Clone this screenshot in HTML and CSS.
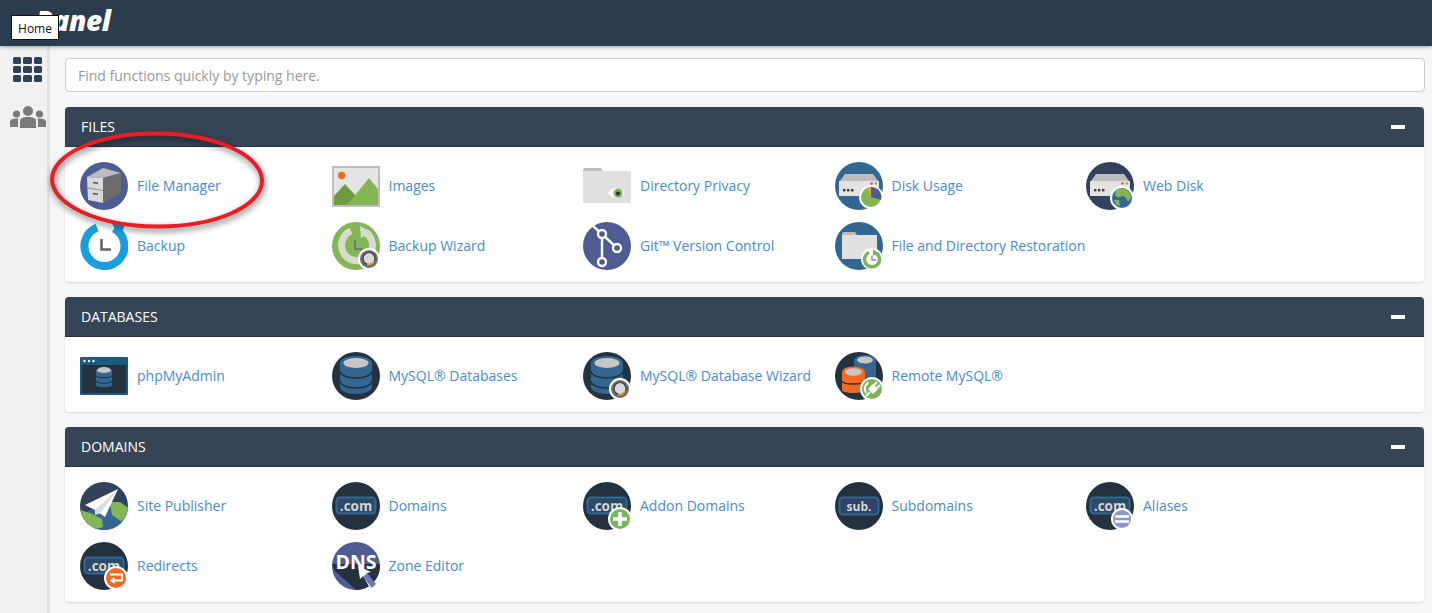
FILE: index.html
```html
<!DOCTYPE html>
<html lang="en">
<head>
<meta charset="utf-8">
<title>cPanel</title>
<link rel="stylesheet" href="styles.css">
</head>
<body>
<svg class="defs" width="0" height="0" aria-hidden="true">
  <defs>
    <clipPath id="disc"><circle cx="24" cy="24" r="24"/></clipPath>
    <g id="server">
      <path d="M5 19 10 12H38L43 19Z" fill="#bdbdbd"/>
      <rect x="4" y="19" width="40" height="15" fill="#e3e3e3"/>
      <rect x="8" y="27" width="2.4" height="2.4" fill="#3a3a3a"/>
      <rect x="12" y="27" width="2.4" height="2.4" fill="#3a3a3a"/>
      <rect x="16" y="27" width="2.4" height="2.4" fill="#3a3a3a"/>
      <circle cx="36.500" cy="21.500" r="1.300" fill="#d9534f"/>
      <circle cx="41" cy="21.500" r="1.300" fill="#7ab55c"/>
    </g>
    <g id="db">
      <path d="M8 10V35C8 39 15 42 24 42S40 39 40 35V10Z" fill="#336791"/>
      <path d="M8 19C8 23 15 26 24 26S40 23 40 19M8 29C8 33 15 36 24 36S40 33 40 29" fill="none" stroke="#24323f" stroke-width="1.600"/>
      <ellipse cx="24" cy="11" rx="16" ry="7" fill="#336791"/>
      <ellipse cx="24" cy="11" rx="12.500" ry="5" fill="#c6c6c6"/>
    </g>
    <g id="com">
      <circle cx="24" cy="24" r="24" fill="#24323f"/>
      <rect x="4.500" y="15.500" width="39" height="16" rx="3.500" fill="#2b4a68" stroke="#336791" stroke-width="2"/>
      <text class="com-text" x="24" y="28.500">.com</text>
    </g>
    <g id="headset">
      <circle cx="37" cy="37" r="11" fill="#fff"/>
      <circle cx="37" cy="37" r="9" fill="#6e6e6e"/>
      <circle cx="37" cy="36.500" r="6" fill="#d8d8d8" stroke="#3d3d3d" stroke-width="1.200"/>
      <path d="M42 39C41 42 38 43 35 42.500" fill="none" stroke="#e09a2b" stroke-width="1.600"/>
    </g>
    <g id="clock-badge">
      <circle cx="37" cy="37" r="11" fill="#fff"/>
      <path d="M34 30.500A7.500 7.500 0 1 0 41 31" fill="none" stroke="#7ab55c" stroke-width="3.500"/>
      <path d="M37 33.500V38H41" fill="none" stroke="#8a8a8a" stroke-width="1.400"/>
      <path d="M38 27 43 31 38 34Z" fill="#7ab55c"/>
    </g>
  </defs>
</svg>

<header class="topbar">
  <span class="logo">cPanel</span>
</header>
<div class="tooltip">Home</div>

<div class="layout">
  <nav class="sidebar">
    <div class="apps"><i></i><i></i><i></i><i></i><i></i><i></i><i></i><i></i><i></i></div>
    <svg class="users" viewBox="0 0 36 22">
      <circle cx="18" cy="5" r="5"/><circle cx="6.500" cy="8" r="3.600"/><circle cx="29.500" cy="8" r="3.600"/>
      <path d="M10 22V15C10 12 13 11 18 11S26 12 26 15V22Z"/>
      <path d="M0 21V16C0 13 3 12.500 8.500 12.500 8 13.500 8 14.500 8 16V21ZM36 21V16C36 13 33 12.500 27.500 12.500 28 13.500 28 14.500 28 16V21Z"/>
    </svg>
  </nav>

  <main class="content">
    <input class="search" type="text" placeholder="Find functions quickly by typing here.">

    <section class="panel">
      <h2 class="panel-head"><span>FILES</span><b class="minus"></b></h2>
      <div class="items">
        <a class="item"><svg class="icon" viewBox="0 0 48 48">
          <circle cx="24" cy="24" r="24" fill="#4f5b93"/>
          <path d="M7 15 23 6 41 11 23 16Z" fill="#bcbcbc"/>
          <path d="M7 15 23 16V41L8 38Z" fill="#d9d9d9"/>
          <path d="M23 16 41 11V31L23 41Z" fill="#6c6c6c"/>
          <path d="M8 26 23 28.500" stroke="#8f8f8f" stroke-width="1"/>
          <path d="M13 20.500 18 21.200M13 31.500 18 32.200" stroke="#555" stroke-width="1.600"/>
        </svg><span>File Manager</span></a>
        <a class="item"><svg class="icon" viewBox="0 0 48 48">
          <rect x="0" y="4" width="48" height="41" fill="#bdbdbd"/>
          <rect x="2" y="6" width="44" height="37" fill="#e4e4e4"/>
          <circle cx="9.700" cy="13.500" r="3.700" fill="#f26a21"/>
          <path d="M2 41V34L13 22 24 34 15 43H2Z" fill="#6f9a3f"/>
          <path d="M15 43 37 16 46 27V43Z" fill="#85b655"/>
        </svg><span>Images</span></a>
        <a class="item"><svg class="icon" viewBox="0 0 48 48">
          <path d="M0 9C0 7 1 6 2 6H18L20 9V12H0Z" fill="#bdbdbd"/>
          <rect x="0" y="9" width="48" height="32" rx="1" fill="#e0e0e0"/>
          <path d="M25 31C29 25 35 24 42 31 35 38 29 37 25 31Z" fill="#fff"/>
          <circle cx="35" cy="31" r="4.500" fill="#7ab55c"/>
          <circle cx="35" cy="31.500" r="2" fill="#24323f"/>
        </svg><span>Directory Privacy</span></a>
        <a class="item"><svg class="icon" viewBox="0 0 48 48">
          <circle cx="24" cy="24" r="24" fill="#336791"/>
          <use href="#server"/>
          <circle cx="36" cy="35" r="12" fill="#fff"/>
          <circle cx="36" cy="35" r="10" fill="#85b655"/>
          <path d="M36 35V25A10 10 0 0 1 46 38Z" fill="#4f5b93"/>
          <path d="M36 35V25A10 10 0 0 0 32 26Z" fill="#e8a33d"/>
        </svg><span>Disk Usage</span></a>
        <a class="item"><svg class="icon" viewBox="0 0 48 48">
          <circle cx="24" cy="24" r="24" fill="#33415c"/>
          <use href="#server"/>
          <circle cx="36" cy="36" r="12" fill="#fff"/>
          <circle cx="36" cy="36" r="10" fill="#336791"/>
          <path d="M30 28C34 25 40 26 44 31 46 36 44 38 42 40 40 36 39 34 36 34 33 36 31 36 29 33Z" fill="#85b655"/>
          <path d="M28 38 33 38 34 44 30 43Z" fill="#85b655"/>
        </svg><span>Web Disk</span></a>
        <a class="item"><svg class="icon" viewBox="0 0 48 48">
          <path d="M17 5.500A20 20 0 1 0 34 6.500" fill="none" stroke="#1a9fdc" stroke-width="8"/>
          <path d="M31 0 46 0 40 15Z" fill="#1a9fdc"/>
          <path d="M21.500 17V27.500H31" fill="none" stroke="#666" stroke-width="2.600"/>
        </svg><span>Backup</span></a>
        <a class="item"><svg class="icon" viewBox="0 0 48 48">
          <circle cx="24" cy="24" r="24" fill="#85b655"/>
          <path d="M19 9A15.500 15.500 0 1 0 33 10" fill="none" stroke="#d7dccb" stroke-width="7"/>
          <path d="M28 4 39 10 29 16Z" fill="#d7dccb"/>
          <path d="M23 18V27H31" fill="none" stroke="#777" stroke-width="2"/>
          <use href="#headset"/>
        </svg><span>Backup Wizard</span></a>
        <a class="item"><svg class="icon" viewBox="0 0 48 48">
          <circle cx="24" cy="24" r="24" fill="#4f5b93"/>
          <path d="M10 4 19 12V41M19 12 34 26" fill="none" stroke="#fff" stroke-width="2.400"/>
          <circle cx="19" cy="12" r="4" fill="#4f5b93" stroke="#fff" stroke-width="2.400"/>
          <circle cx="34" cy="26" r="4" fill="#4f5b93" stroke="#fff" stroke-width="2.400"/>
          <circle cx="19" cy="40" r="4" fill="#4f5b93" stroke="#fff" stroke-width="2.400"/>
        </svg><span>Git™ Version Control</span></a>
        <a class="item"><svg class="icon" viewBox="0 0 48 48">
          <circle cx="24" cy="24" r="24" fill="#336791"/>
          <path d="M7 12C7 11 7.500 10 9 10H20L22 13V16H7Z" fill="#bdbdbd"/>
          <rect x="7" y="13" width="35" height="24" fill="#e0e0e0"/>
          <use href="#clock-badge"/>
        </svg><span>File and Directory Restoration</span></a>
      </div>
    </section>

    <section class="panel">
      <h2 class="panel-head"><span>DATABASES</span><b class="minus"></b></h2>
      <div class="items">
        <a class="item"><svg class="icon" viewBox="0 0 48 48">
          <rect x="0" y="5" width="48" height="38" rx="1" fill="#1a5a7e"/>
          <rect x="2" y="13" width="44" height="28" fill="#24323f"/>
          <circle cx="4.500" cy="9" r="1.200" fill="#fff"/><circle cx="9" cy="9" r="1.200" fill="#fff"/><circle cx="13.500" cy="9" r="1.200" fill="#fff"/>
          <path d="M16 18V33C16 36 32 36 32 33V18Z" fill="#336791"/>
          <path d="M16 23.500C16 26.500 32 26.500 32 23.500M16 29C16 32 32 32 32 29" fill="none" stroke="#24323f" stroke-width="1"/>
          <ellipse cx="24" cy="18" rx="7" ry="3" fill="#c6c6c6"/>
        </svg><span>phpMyAdmin</span></a>
        <a class="item"><svg class="icon" viewBox="0 0 48 48">
          <circle cx="24" cy="24" r="24" fill="#24323f"/>
          <use href="#db"/>
        </svg><span>MySQL® Databases</span></a>
        <a class="item"><svg class="icon" viewBox="0 0 48 48">
          <circle cx="24" cy="24" r="24" fill="#24323f"/>
          <use href="#db"/>
          <use href="#headset"/>
        </svg><span>MySQL® Database Wizard</span></a>
        <a class="item"><svg class="icon" viewBox="0 0 48 48">
          <circle cx="24" cy="24" r="24" fill="#24323f"/>
          <path d="M19 8V26H41V8Z" fill="#336791"/>
          <ellipse cx="30" cy="8" rx="11" ry="5" fill="#336791"/>
          <ellipse cx="30" cy="8" rx="8" ry="3.500" fill="#c6c6c6"/>
          <path d="M7 20V38C7 42 30 42 30 38V20Z" fill="#f26a21"/>
          <path d="M7 29C7 33 30 33 30 29" fill="none" stroke="#24323f" stroke-width="1.400"/>
          <ellipse cx="18.500" cy="20" rx="11.500" ry="5.500" fill="#f26a21"/>
          <ellipse cx="18.500" cy="20" rx="8.500" ry="3.800" fill="#c6c6c6"/>
          <circle cx="37" cy="37" r="12" fill="#fff"/>
          <circle cx="37" cy="37" r="10" fill="#7ab55c"/>
          <path d="M33.500 30.500A7.500 7.500 0 0 0 31 41" fill="none" stroke="#fff" stroke-width="2"/>
          <path d="M33 37 38 32 43 37 38 42Z" fill="#fff"/>
          <path d="M39 33 42 30M42 36 45 33M35 40 31 44" stroke="#fff" stroke-width="2"/>
        </svg><span>Remote MySQL®</span></a>
      </div>
    </section>

    <section class="panel">
      <h2 class="panel-head"><span>DOMAINS</span><b class="minus"></b></h2>
      <div class="items">
        <a class="item"><svg class="icon" viewBox="0 0 48 48">
          <circle cx="24" cy="24" r="24" fill="#33415c"/>
          <g clip-path="url(#disc)">
            <path d="M0 32 30 20 48 24V48H0Z" fill="#336791"/>
            <path d="M0 28 10 31 22 37 23 45 12 48 0 42Z" fill="#85b655"/>
            <path d="M30 20H40L48 26V36L41 39 32 33Z" fill="#85b655"/>
          </g>
          <path d="M5 23 38 7 25 35 15 28Z" fill="#fff"/>
          <path d="M38 7 15 28 15 33 20 31.500Z" fill="#dcdcdc"/>
        </svg><span>Site Publisher</span></a>
        <a class="item"><svg class="icon" viewBox="0 0 48 48">
          <use href="#com"/>
        </svg><span>Domains</span></a>
        <a class="item"><svg class="icon" viewBox="0 0 48 48">
          <use href="#com"/>
          <circle cx="37" cy="37" r="12" fill="#fff"/>
          <circle cx="37" cy="37" r="10" fill="#7ab55c"/>
          <path d="M37 30V44M30 37H44" stroke="#fff" stroke-width="3.500"/>
        </svg><span>Addon Domains</span></a>
        <a class="item"><svg class="icon" viewBox="0 0 48 48">
          <circle cx="24" cy="24" r="24" fill="#24323f"/>
          <rect x="4.500" y="15.500" width="39" height="17" rx="3.500" fill="#2f4368" stroke="#336791" stroke-width="2"/>
          <text class="sub-text" x="24" y="29">sub.</text>
        </svg><span>Subdomains</span></a>
        <a class="item"><svg class="icon" viewBox="0 0 48 48">
          <use href="#com"/>
          <circle cx="36" cy="37" r="11" fill="#fff"/>
          <circle cx="36" cy="37" r="9" fill="#8f97c4"/>
          <path d="M29 34.500H43M29 39.500H43" stroke="#fff" stroke-width="2.400"/>
        </svg><span>Aliases</span></a>
        <a class="item"><svg class="icon" viewBox="0 0 48 48">
          <use href="#com"/>
          <circle cx="36" cy="36" r="12" fill="#fff"/>
          <circle cx="36" cy="36" r="10" fill="#f26a21"/>
          <path d="M30 32.500H42V38.500H32M34.500 36 31.500 38.500 34.500 41" fill="none" stroke="#fff" stroke-width="2"/>
        </svg><span>Redirects</span></a>
        <a class="item"><svg class="icon" viewBox="0 0 48 48">
          <circle cx="24" cy="24" r="24" fill="#4f5b93"/>
          <g clip-path="url(#disc)">
            <path d="M0 22H48V30L38 48H24L2 28Z" fill="#24323f"/>
          </g>
          <text class="dns-text" x="24" y="27">DNS</text>
          <path d="M26 24 28 37 31 34 38 46 42 43 35 31 39 30Z" fill="#fff"/>
          <path d="M31 35 35 31 44 42 40 46Z" fill="#6f79b5"/>
        </svg><span>Zone Editor</span></a>
      </div>
    </section>
  </main>
</div>

<svg class="callout" viewBox="0 0 226 108">
  <ellipse cx="113" cy="52" rx="105" ry="46.500" transform="rotate(0.500 113 52)"/>
</svg>
</body>
</html>
```

FILE: styles.css
```css
* {
  box-sizing: border-box;
}

html,
body {
  margin: 0;
  height: 100%;
  overflow: hidden;
}

body {
  background: #f6f6f6;
  font-family: "Open Sans", "Liberation Sans", sans-serif;
  font-size: 14px;
  color: #333;
  display: flex;
  flex-direction: column;
}

.defs {
  position: absolute;
}

.topbar {
  height: 46px;
  flex: none;
  background: #2b3c4f;
  box-shadow: 0 1px 4px rgba(0, 0, 0, 0.35);
  padding-left: 22px;
  position: relative;
  z-index: 2;
  overflow: hidden;
}

.logo {
  display: block;
  color: #fff;
  font-family: "Open Sans", sans-serif;
  font-size: 28px;
  font-weight: 800;
  font-style: italic;
  line-height: 40px;
  letter-spacing: -0.5px;
}

.tooltip {
  position: absolute;
  left: 11px;
  top: 15px;
  width: 48px;
  height: 25px;
  background: #fff;
  border: 1px solid #111;
  color: #111;
  font-size: 12px;
  line-height: 25px;
  text-align: center;
  z-index: 5;
}

.layout {
  flex: 1;
  display: flex;
  min-height: 0;
}

.sidebar {
  width: 50px;
  flex: none;
  background: #f1f1f1;
  border-right: 3px solid #e2e2e2;
  display: flex;
  flex-direction: column;
  align-items: center;
  padding-top: 11px;
  padding-left: 8px;
  gap: 24px;
}

.apps {
  display: grid;
  grid-template-columns: repeat(3, 8.500px);
  grid-auto-rows: 7px;
  gap: 2px;
}

.apps i {
  background: #2f4155;
  border-radius: 1.500px;
}

.users {
  width: 36px;
  height: 22px;
  flex: none;
  fill: #7a7a7a;
}

.content {
  flex: 1;
  min-width: 0;
  padding: 12px 8px 0 15px;
  display: flex;
  flex-direction: column;
  gap: 15px;
}

.search {
  height: 34px;
  width: calc(100% + 1px);
  flex: none;
  border: 1px solid #ccc;
  border-radius: 4px;
  background: #fff;
  padding: 0 12px;
  font: inherit;
  color: #555;
  outline: none;
}

.search::placeholder {
  color: #999;
  opacity: 1;
}

.panel {
  background: #fff;
  border-radius: 4px;
  box-shadow: 0 1px 2px rgba(0, 0, 0, 0.12);
  flex: none;
}

.panel-head {
  margin: 0;
  height: 40px;
  background: #364555;
  border-bottom: 1px solid #263341;
  border-radius: 4px 4px 0 0;
  color: #fff;
  font-size: 14px;
  font-weight: 400;
  padding: 0 19px 0 16px;
  display: flex;
  align-items: center;
  justify-content: space-between;
}

.minus {
  width: 14px;
  height: 4px;
  background: #fff;
}

.items {
  display: grid;
  grid-template-columns: repeat(5, 251.500px);
  grid-auto-rows: 48px;
  row-gap: 12px;
  padding: 15px 0 12px 15px;
}

.item {
  display: flex;
  align-items: center;
  gap: 9px;
  color: #4a8bcb;
  white-space: nowrap;
}

.item span {
  padding-bottom: 2px;
}

.icon {
  width: 48px;
  height: 48px;
  flex: none;
}

.com-text {
  fill: #d4d4d4;
  font-size: 13.500px;
  font-weight: 700;
  text-anchor: middle;
  font-family: "Open Sans", sans-serif;
}

.sub-text {
  fill: #d4d4d4;
  font-size: 12px;
  font-weight: 700;
  text-anchor: middle;
  font-family: "Open Sans", sans-serif;
}

.dns-text {
  fill: #fff;
  font-size: 19.500px;
  font-weight: 700;
  text-anchor: middle;
  font-family: "Open Sans", sans-serif;
}

.callout {
  position: absolute;
  left: 44px;
  top: 128px;
  width: 226px;
  height: 108px;
  fill: none;
  stroke: #ed1c24;
  stroke-width: 4px;
  overflow: visible;
  filter: drop-shadow(1px 3px 3px rgba(0, 0, 0, 0.55));
  z-index: 4;
}
```
